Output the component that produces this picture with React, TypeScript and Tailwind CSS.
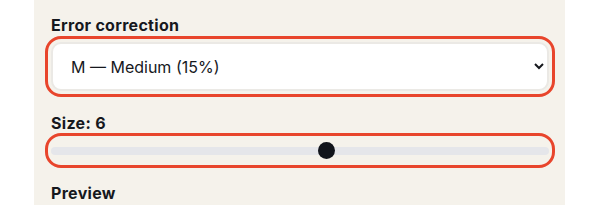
import { useState } from "react";

export default function App() {
  const [level, setLevel] = useState("M");
  const [size, setSize] = useState(6);

  return (
    <div className="h-[205px] w-[600px] overflow-hidden bg-white font-['Inter',sans-serif] text-[#16181d]">
      <div className="ml-[34px] flex h-full w-[531px] flex-col bg-[#f5f2eb] px-[17px] pt-[13px]">
        <label htmlFor="ec" className="block text-[16px] font-bold leading-6 tracking-[0.3px]">
          Error correction
        </label>
        <select
          id="ec"
          value={level}
          onChange={(e) => setLevel(e.target.value)}
          className="mt-[5px] h-[49px] w-[498px] rounded-[10px] border-2 border-[#ebe9e5] bg-white pl-[14px] pr-2 text-[16px] text-[#16181d] outline-[3px] outline-offset-[3px] outline-[#e8452c] outline-solid"
        >
          <option value="L">L — Low (7%)</option>
          <option value="M">M — Medium (15%)</option>
          <option value="Q">Q — Quartile (25%)</option>
          <option value="H">H — High (30%)</option>
        </select>

        <label htmlFor="size" className="mt-5 block text-[16px] font-bold leading-6 tracking-[0.3px]">
          Size: {size}
        </label>
        <input
          id="size"
          type="range"
          min={1}
          max={10}
          value={size}
          onChange={(e) => setSize(Number(e.target.value))}
          className="mt-1 h-[23px] w-[498px] cursor-pointer appearance-none rounded-[10px] bg-transparent outline-[3px] outline-offset-[3px] outline-[#e8452c] outline-solid [&::-webkit-slider-runnable-track]:h-[8px] [&::-webkit-slider-runnable-track]:rounded-full [&::-webkit-slider-runnable-track]:bg-[#e5e6ea] [&::-webkit-slider-thumb]:mt-[-4.5px] [&::-webkit-slider-thumb]:h-[17px] [&::-webkit-slider-thumb]:w-[17px] [&::-webkit-slider-thumb]:appearance-none [&::-webkit-slider-thumb]:rounded-full [&::-webkit-slider-thumb]:bg-[#11141b]"
        />

        <h3 className="mt-[19px] text-[16px] font-bold leading-6 tracking-[0.3px]">Preview</h3>
      </div>
    </div>
  );
}
